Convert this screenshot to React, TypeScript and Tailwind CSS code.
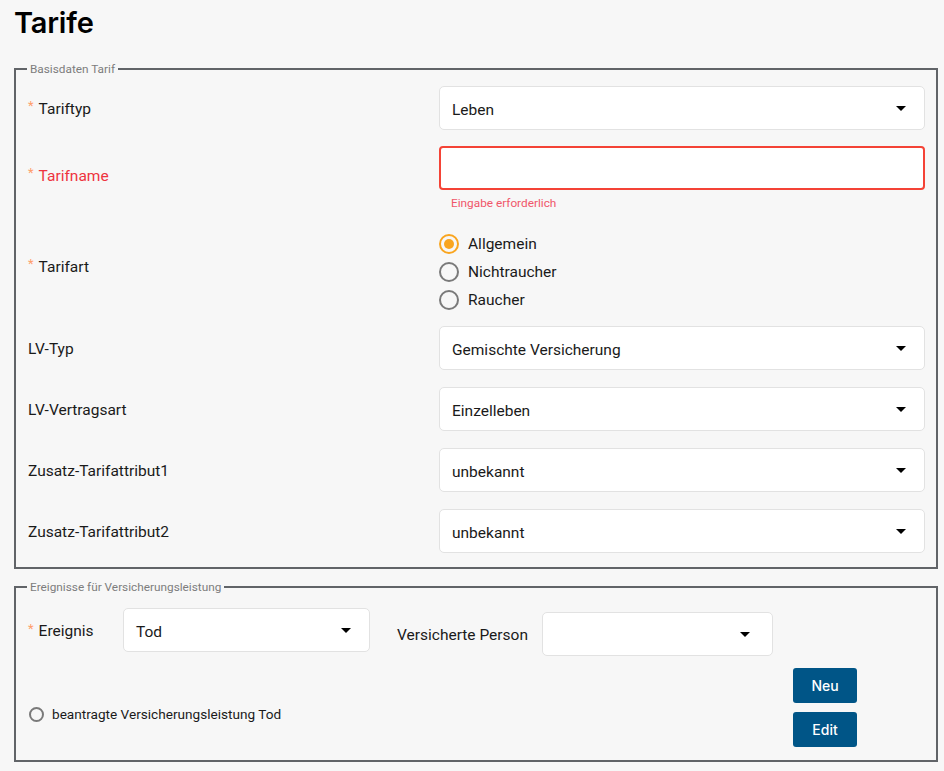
import React from "react";

const Caret = () => (
  <span className="inline-block w-0 h-0 border-l-[5px] border-r-[5px] border-t-[5px] border-l-transparent border-r-transparent border-t-black" />
);

const Req = () => (
  <span className="text-[#ff9e6b] text-[13px] leading-none mr-[5px] relative -top-[3px]">*</span>
);

const Select = ({ value, className = "" }: { value?: string; className?: string }) => (
  <div
    className={
      "h-[44px] bg-white border border-[#e2e2e2] rounded-[5px] flex items-center justify-between pl-[12px] pr-[18px] " +
      className
    }
  >
    <span className="text-[15.5px] text-[#1a1a1a] pt-[5px]">{value}</span>
    <Caret />
  </div>
);

const Radio = ({ checked, label }: { checked?: boolean; label: string }) => (
  <div className="h-[28px] flex items-center">
    <span
      className={
        "w-[20px] h-[20px] rounded-full border-2 flex items-center justify-center " +
        (checked ? "border-[#f9a51f]" : "border-[#7a7a7a]")
      }
    >
      {checked && <span className="w-[10px] h-[10px] rounded-full bg-[#f9a51f]" />}
    </span>
    <span className="ml-[9px] text-[15.5px] text-[#1a1a1a] pt-[2px]">{label}</span>
  </div>
);

const Row = ({
  label,
  required,
  children,
  className = "",
  labelClass = "",
}: {
  label: string;
  required?: boolean;
  children: React.ReactNode;
  className?: string;
  labelClass?: string;
}) => (
  <div className={"grid grid-cols-[411px_1fr] " + className}>
    <div className={"flex items-center text-[15.5px] text-[#1a1a1a] " + labelClass}>
      {required && <Req />}
      <span className="pt-[3px]">{label}</span>
    </div>
    <div>{children}</div>
  </div>
);

export default function App() {
  return (
    <div
      className="min-h-[771px] bg-[#f7f7f7] pb-[10px]"
      style={{ fontFamily: "Roboto, 'Liberation Sans', sans-serif" }}
    >
      <h1
        className="pl-[14px] pt-[4px] text-[29px] leading-[38px] font-semibold text-black tracking-[-0.2px]"
        style={{ fontFamily: "Inter, 'Liberation Sans', sans-serif" }}
      >
        Tarife
      </h1>

      <fieldset className="mt-[20px] ml-[14px] w-[924px] border-2 border-[#616468] p-0">
        <legend className="ml-[11px] px-[3px] text-[11.8px] leading-[14px] text-[#7d7d7d]">
          Basisdaten Tarif
        </legend>
        <div className="pl-[12px] pr-[11px] pt-[10px] pb-[14px] flex flex-col">
          <Row label="Tariftyp" required>
            <Select value="Leben" />
          </Row>

          <Row label="Tarifname" required className="mt-[16px]" labelClass="pb-[6px] !text-[#ee3340]">
            <div className="h-[44px] bg-white border-2 border-[#f44336] rounded-[4px]" />
            <div className="mt-[6px] pl-[12px] text-[11.8px] leading-[14px] text-[#f0566a]">
              Eingabe erforderlich
            </div>
          </Row>

          <Row label="Tarifart" required className="mt-[20px]" labelClass="pb-[12px]">
            <div className="flex flex-col">
              <Radio checked label="Allgemein" />
              <Radio label="Nichtraucher" />
              <Radio label="Raucher" />
            </div>
          </Row>

          <Row label="LV-Typ" className="mt-[12px]">
            <Select value="Gemischte Versicherung" />
          </Row>
          <Row label="LV-Vertragsart" className="mt-[17px]">
            <Select value="Einzelleben" />
          </Row>
          <Row label="Zusatz-Tarifattribut1" className="mt-[17px]">
            <Select value="unbekannt" />
          </Row>
          <Row label="Zusatz-Tarifattribut2" className="mt-[17px]">
            <Select value="unbekannt" />
          </Row>
        </div>
      </fieldset>

      <fieldset className="mt-[11px] ml-[14px] w-[924px] border-2 border-[#616468] p-0">
        <legend className="ml-[11px] px-[3px] text-[11.8px] leading-[14px] text-[#7d7d7d]">
          Ereignisse für Versicherungsleistung
        </legend>
        <div className="pl-[12px] pr-[11px] pt-[14px] pb-[13px]">
          <div className="flex items-start">
            <div className="w-[95px] h-[44px] flex items-center text-[15.5px] text-[#1a1a1a] pt-[3px]">
              <Req />
              <span>Ereignis</span>
            </div>
            <Select value="Tod" className="w-[247px] pr-[18px]" />
            <div className="ml-[27px] w-[145px] h-[44px] mt-[4px] flex items-center text-[15.5px] text-[#1a1a1a] pt-[3px]">
              Versicherte Person
            </div>
            <Select className="w-[231px] mt-[4px] pr-[22px]" />
          </div>

          <div className="mt-[12px] grid grid-cols-[765px_64px] items-start">
            <div className="flex items-center mt-[39px] pl-[1px]">
              <span className="w-[15px] h-[15px] rounded-full border-2 border-[#7a7a7a]" />
              <span className="ml-[8px] text-[13.6px] leading-[15px] text-[#1a1a1a]">
                beantragte Versicherungsleistung Tod
              </span>
            </div>
            <div
              className="flex flex-col gap-[9px]"
              style={{ fontFamily: "Inter, 'Liberation Sans', sans-serif" }}
            >
              <button className="h-[35px] w-[64px] rounded-[3px] bg-[#005587] text-white text-[14px] font-medium">
                Neu
              </button>
              <button className="h-[35px] w-[64px] rounded-[3px] bg-[#005587] text-white text-[14px] font-medium">
                Edit
              </button>
            </div>
          </div>
        </div>
      </fieldset>
    </div>
  );
}
